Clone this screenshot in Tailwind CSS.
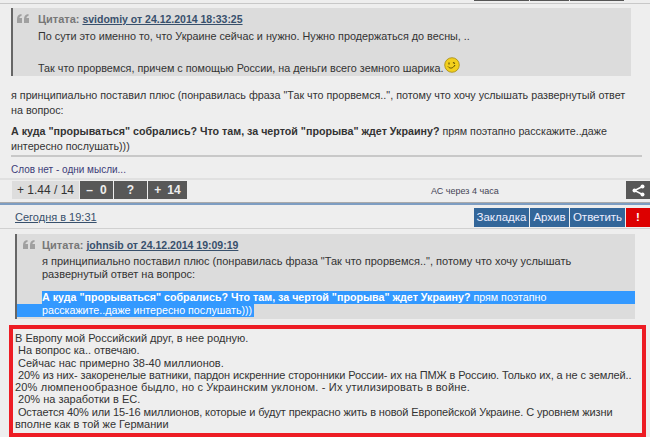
<!DOCTYPE html>
<html><head><meta charset="utf-8">
<script src="https://cdn.jsdelivr.net/npm/@tailwindcss/browser@4"></script>
</head>
<body class="m-0">
<div class="w-[650px] h-[437px] overflow-hidden bg-[#eeeeee] text-[#333333] text-[11px] leading-[15px] font-['Liberation_Sans',Arial,sans-serif] relative">
  <div class="flex h-[4px] border-b border-[#c8c8c8]">
    <div class="ml-[474px] w-[55px] h-[1px] bg-[#555]"></div>
    <div class="ml-[1px] w-[39px] h-[1px] bg-[#555]"></div>
    <div class="ml-[1px] w-[54px] h-[1px] bg-[#555]"></div>
  </div>
  <div class="ml-[11px] mt-[4px] h-[68px] bg-[#dcdcdc] border-l-2 border-[#666] pl-[4px] flex w-[620px] text-[10.8px]">
    <div class="w-[21px] pt-[6px]">
      <svg width="12" height="9" viewBox="0 0 12 9"><path d="M0 9V5C0 2 1.500 .5 4.500 0V2C3 2.300 2.500 3 2.500 4H5V9ZM7 9V5C7 2 8.500 .5 11.500 0V2C10 2.300 9.500 3 9.500 4H12V9Z" fill="#a0a0a0"/></svg>
    </div>
    <div class="pt-[4px]">
      <div class="text-[#777] h-[15px] whitespace-nowrap text-[10.5px]"><b class="font-bold text-[11px]">Цитата:</b> <a class="underline font-bold text-[#38506c]">svidomiy от 24.12.2014 18:33:25</a></div>
      <div class="mt-[2px] whitespace-nowrap h-[29px]">По сути это именно то, что Украине сейчас и нужно. Нужно продержаться до весны, ..</div>
      <div class="whitespace-nowrap flex items-end h-[18px]">Так что прорвемся, причем с помощью России, на деньги всего земного шарика.
        <svg class="ml-[1px] mb-[3px]" width="16" height="16" viewBox="0 0 16 16"><circle cx="8" cy="8" r="7.3" fill="#f2cf1d" stroke="#a58a10" stroke-width="0.8"/><path d="M4 9.5c2 2.5 5 2 7-1.500" fill="none" stroke="#5a4a00" stroke-width="1"/><path d="M5 5.500v2M9 5.500l2 1" stroke="#5a4a00" stroke-width="1.100" fill="none"/></svg>
      </div>
    </div>
  </div>
  <div class="ml-[11px] w-[625px] mt-[12px]">
    <p class="text-[10.76px]">я принципиально поставил плюс (понравилась фраза "Так что прорвемся..", потому что хочу услышать развернутый ответ на вопрос:</p>
    <p class="mt-[6px] text-[10.7px]"><b>А куда "прорываться" собрались? Что там, за чертой "прорыва" ждет Украину?</b> прям поэтапно расскажите..даже интересно послушать)))</p>
  </div>
  <div class="ml-[11px] mt-[1px] w-[631px] border-t-2 border-[#c8c8c8] pt-[6px] text-[10px] leading-[14px] text-[#3c3c78] h-[23px]">Слов нет - одни мысли...</div>
  <div class="border-t-2 border-[#e0e0e0] h-[24px] flex items-start relative">
    <div class="ml-[12px] mt-[1px] h-[18px] w-[67px] bg-[#dddddd] flex items-center justify-center text-[12px]">+ 1.44 / 14</div>
    <div class="ml-[1px] mt-[1px] h-[18px] w-[33px] bg-[#585858] text-[#eee] flex items-center justify-center font-bold text-[12px] gap-[7px]"><span>–</span><span>0</span></div>
    <div class="ml-[1px] mt-[1px] h-[18px] w-[33px] bg-[#585858] text-[#eee] flex items-center justify-center font-bold text-[12px]">?</div>
    <div class="ml-[1px] mt-[1px] h-[18px] w-[39px] bg-[#585858] text-[#eee] flex items-center justify-center font-bold text-[12px] gap-[6px]"><span>+</span><span>14</span></div>
    <div class="ml-[244px] mt-[4px] text-[9px] leading-[14px] text-[#445]">АС через 4 часа</div>
    <div class="ml-auto mt-[1px] h-[18px] w-[24px] bg-[#585858] flex items-center justify-center">
      <svg width="13" height="13" viewBox="0 0 13 13"><path d="M10.500 2.500L2.500 6.500L10.500 10.500" fill="none" stroke="#fff" stroke-width="1.400"/><circle cx="10.500" cy="2.500" r="2" fill="#fff"/><circle cx="2.500" cy="6.500" r="2" fill="#fff"/><circle cx="10.500" cy="10.500" r="2" fill="#fff"/></svg>
    </div>
  </div>
  <div class="h-[3px] bg-[#7d9dc2] border-t border-[#aaa]"></div>
  <div class="h-[24px] border-b border-[#d0d0d0] flex items-start">
    <a class="ml-[15px] mt-[5px] underline text-[#38506c] text-[11px]">Сегодня в 19:31</a>
    <div class="ml-auto flex gap-[1px] mt-[3px] text-[11.5px]">
      <div class="h-[19px] w-[55px] bg-[#336699] text-[#eef] flex items-center justify-center">Закладка</div>
      <div class="h-[19px] w-[39px] bg-[#336699] text-[#eef] flex items-center justify-center">Архив</div>
      <div class="h-[19px] w-[55px] bg-[#336699] text-[#eef] flex items-center justify-center">Ответить</div>
      <div class="h-[19px] w-[24px] bg-[#dd0000] text-white font-bold flex items-center justify-center">!</div>
    </div>
  </div>
  <div class="ml-[15px] mt-[5px] w-[620px] h-[85px] bg-[#dcdcdc] border-l-2 border-[#666] flex flex-col">
    <div class="pl-[25px] pt-[4px] relative">
      <svg class="absolute left-[6px] top-[6px]" width="12" height="9" viewBox="0 0 12 9"><path d="M0 9V5C0 2 1.500 .5 4.500 0V2C3 2.300 2.500 3 2.500 4H5V9ZM7 9V5C7 2 8.500 .5 11.500 0V2C10 2.300 9.500 3 9.500 4H12V9Z" fill="#a0a0a0"/></svg>
      <div class="text-[#777] h-[15px] whitespace-nowrap text-[10.5px]"><b class="font-bold text-[11px]">Цитата:</b> <a class="underline font-bold text-[#38506c]">johnsib от 24.12.2014 19:09:19</a></div>
      <div class="mt-[2px] w-[590px] leading-[13px]">я принципиально поставил плюс (понравилась фраза "Так что прорвемся..", потому что хочу услышать развернутый ответ на вопрос:</div>
    </div>
    <div class="mt-[10px] ml-[25px] h-[13px] bg-[#3399ff] text-white leading-[13px] whitespace-nowrap text-[10.7px]"><b>А куда "прорываться" собрались? Что там, за чертой "прорыва" ждет Украину?</b> прям поэтапно</div>
    <div class="w-[237px] h-[13px] bg-[#3399ff] text-white leading-[13px] pl-[25px] whitespace-nowrap text-[10.7px]">расскажите..даже интересно послушать)))</div>
  </div>
  <div class="ml-[9px] mt-[6px] w-[637px] h-[112px] border-[4px] border-[#ed1c24] pl-[2px] pt-[3px] leading-[12.3px] whitespace-nowrap">
    В Европу мой Российский друг, в нее родную.<br>
    &nbsp;На вопрос ка.. отвечаю.<br>
    &nbsp;Сейчас нас примерно 38-40 миллионов.<br>
    <span class="tracking-[-0.1px]">&nbsp;20% из них- закоренелые ватники, пардон искренние сторонники России- их на ПМЖ в Россию. Только их, а не с землей..</span><br>
    <span class="tracking-[0.18px]">20% люмпенообразное быдло, но с Украинским уклоном. - Их утилизировать в войне.</span><br>
    &nbsp;20% на заработки в ЕС.<br>
    <span class="tracking-[-0.12px]">&nbsp;Остается 40% или 15-16 миллионов, которые и будут прекрасно жить в новой Европейской Украине. С уровнем жизни</span><br>вполне как в той же Германии
  </div>
</div>
</body></html>
